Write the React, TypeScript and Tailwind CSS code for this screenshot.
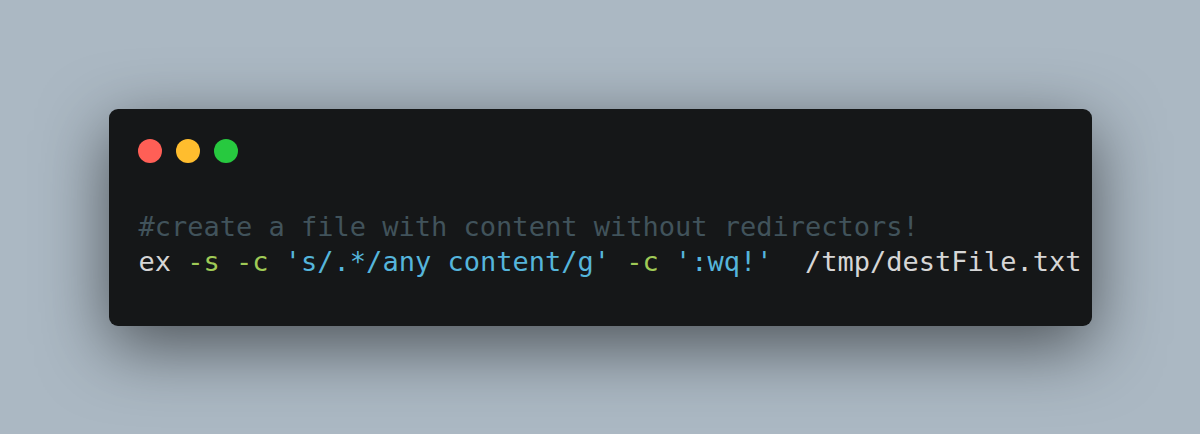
const mono = "font-['DejaVu_Sans_Mono','Liberation_Mono',monospace]"

function TrafficLights() {
  return (
    <div className="flex items-center gap-[14px] pl-[29px]">
      <span className="h-6 w-6 rounded-full bg-[#ff5f56]" />
      <span className="h-6 w-6 rounded-full bg-[#ffbd2e]" />
      <span className="h-6 w-6 rounded-full bg-[#27c93f]" />
    </div>
  )
}

export default function App() {
  return (
    <div className="flex h-[434px] w-[1200px] items-center justify-center bg-[#abb8c3]">
      <div className="w-[983px] rounded-[9px] bg-[#151718] pt-[30px] pb-[47px] shadow-[0_20px_68px_rgba(0,0,0,0.55)]">
        <TrafficLights />
        <pre className={`${mono} mt-[46px] pl-[30px] text-[27px] leading-[35px] text-[#d6d6d6]`}>
          <div className="text-[#41535b]">#create a file with content without redirectors!</div>
          <div>
            ex <span className="text-[#9fca56]">-s</span> <span className="text-[#9fca56]">-c</span>{' '}
            <span className="text-[#55b5db]">'s/.*/any content/g'</span>{' '}
            <span className="text-[#9fca56]">-c</span> <span className="text-[#55b5db]">':wq!'</span>
            {'  '}/tmp/destFile.txt
          </div>
        </pre>
      </div>
    </div>
  )
}
